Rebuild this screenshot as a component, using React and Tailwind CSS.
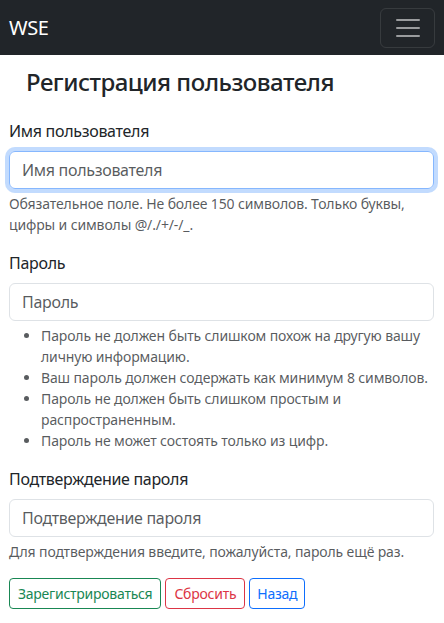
export default function App() {
  return (
    <div className="min-h-[623px] bg-white text-[#212529] [font-family:'Noto_Sans',sans-serif]">
      <nav className="h-[55px] bg-[#212529] flex items-center justify-between pl-[9px] pr-[9px]">
        <span className="text-white text-[20px] leading-[30px] tracking-[-0.4px]">WSE</span>
        <button className="w-[55px] h-[40px] border border-[rgba(255,255,255,0.1)] rounded-[6px] flex items-center justify-center">
          <svg width="30" height="30" viewBox="0 0 30 30">
            <path d="M4 7h22M4 15h22M4 23h22" stroke="rgba(255,255,255,0.55)" strokeWidth="2" strokeLinecap="round" />
          </svg>
        </button>
      </nav>
      <div className="pl-[9px] pr-[10px]">
        <h2 className="mt-[12px] mb-[22px] pl-[17px] text-[24px] leading-[30px] font-medium tracking-[-0.5px]">Регистрация пользователя</h2>
        <div className="mb-[16px]">
          <label className="block mb-[8px] text-[16px] leading-[24px] tracking-[-0.3px]">Имя пользователя</label>
          <input
            placeholder="Имя пользователя"
            className="block w-full h-[38px] px-[12px] text-[16px] tracking-[-0.3px] border border-[#86b7fe] rounded-[6px] outline-none shadow-[0_0_0_4px_rgba(13,110,253,0.25)] placeholder:text-[rgba(33,37,41,0.75)]"
          />
          <div className="mt-[4px] text-[14px] leading-[21px] tracking-[-0.13px] text-[rgba(33,37,41,0.75)]">
            Обязательное поле. Не более 150 символов. Только буквы, цифры и символы @/./+/-/_.
          </div>
        </div>
        <div className="mb-[16px]">
          <label className="block mb-[8px] text-[16px] leading-[24px] tracking-[-0.3px]">Пароль</label>
          <input
            placeholder="Пароль"
            type="password"
            className="block w-full h-[38px] px-[12px] text-[16px] tracking-[-0.3px] border border-[#dee2e6] rounded-[6px] outline-none placeholder:text-[rgba(33,37,41,0.75)]"
          />
          <div className="mt-[4px] text-[14px] leading-[21px] tracking-[-0.13px] text-[rgba(33,37,41,0.75)]">
            <ul className="list-disc pl-[32px]">
              <li>Пароль не должен быть слишком похож на другую вашу личную информацию.</li>
              <li>Ваш пароль должен содержать как минимум 8 символов.</li>
              <li>Пароль не должен быть слишком простым и распространенным.</li>
              <li>Пароль не может состоять только из цифр.</li>
            </ul>
          </div>
        </div>
        <div className="mb-[16px]">
          <label className="block mb-[8px] text-[16px] leading-[24px] tracking-[-0.3px]">Подтверждение пароля</label>
          <input
            placeholder="Подтверждение пароля"
            type="password"
            className="block w-full h-[38px] px-[12px] text-[16px] tracking-[-0.3px] border border-[#dee2e6] rounded-[6px] outline-none placeholder:text-[rgba(33,37,41,0.75)]"
          />
          <div className="mt-[4px] text-[14px] leading-[21px] tracking-[-0.13px] text-[rgba(33,37,41,0.75)]">
            Для подтверждения введите, пожалуйста, пароль ещё раз.
          </div>
        </div>
        <div className="flex gap-[4px]">
          <button className="h-[31px] px-[8px] text-[14px] leading-[21px] tracking-[-0.25px] border border-[#198754] text-[#198754] rounded-[4px]">Зарегистрироваться</button>
          <button className="h-[31px] px-[8px] text-[14px] leading-[21px] tracking-[-0.25px] border border-[#dc3545] text-[#dc3545] rounded-[4px]">Сбросить</button>
          <button className="h-[31px] px-[7px] text-[14px] leading-[21px] tracking-[-0.25px] border border-[#0d6efd] text-[#0d6efd] rounded-[4px]">Назад</button>
        </div>
      </div>
    </div>
  );
}
